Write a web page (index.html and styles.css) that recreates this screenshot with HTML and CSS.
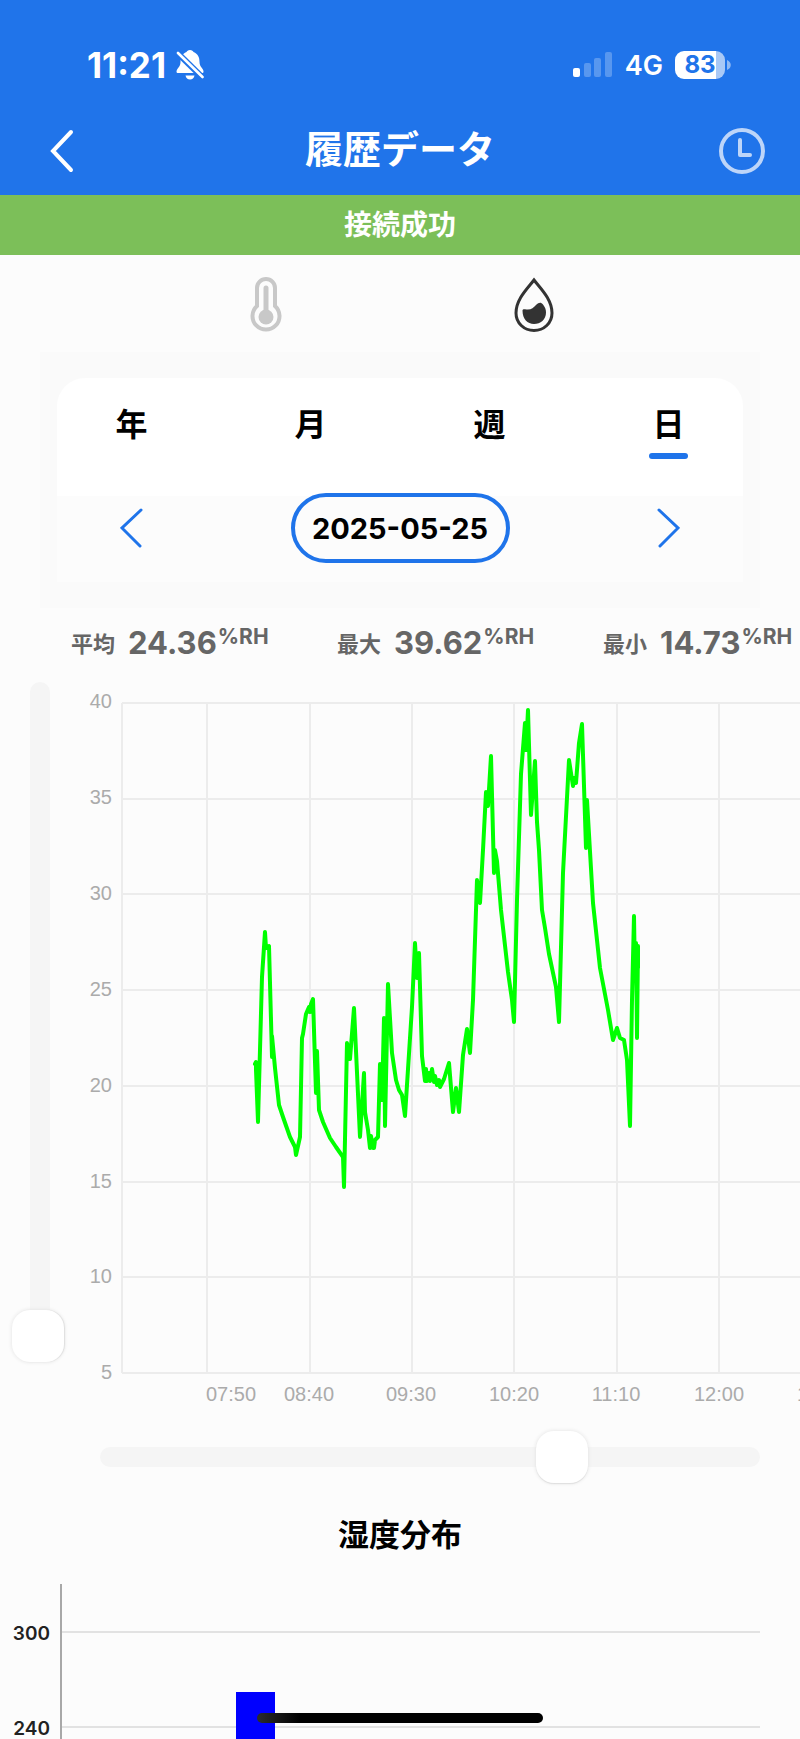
FILE: index.html
```html
<!DOCTYPE html>
<html lang="ja">
<head>
<meta charset="utf-8">
<meta name="viewport" content="width=device-width, initial-scale=1">
<title>履歴データ</title>
<link rel="stylesheet" href="styles.css">
</head>
<body>
<header class="header">
  <div class="status">
    <div class="status-group">
      <span class="status-time">11:21</span>
      <svg class="bell" width="28" height="30" viewBox="0 0 28 30" aria-hidden="true">
        <path d="M14 0c-2 0-3 1-3.500 2C6 4 4.500 7 4.500 12c0 5-4 6.500-4 9.500 0 1 .6 1.500 1.500 1.500h24c1 0 1.500-.5 1.500-1.500 0-3-4-4.500-4-9.500 0-5-1.500-8-6-10C17 1 16 0 14 0z" fill="#fff"/>
        <path d="M9.500 25.500h9c-.5 2.500-2.200 4-4.500 4s-4-1.500-4.500-4z" fill="#fff"/>
        <path d="M1 2.500L27 28" stroke="#2074ea" stroke-width="6"/>
        <path d="M2 3L26.500 27" stroke="#fff" stroke-width="2.600" stroke-linecap="round"/>
      </svg>
    </div>
    <div class="status-group status-right">
      <svg width="40" height="26" viewBox="0 0 40 26" fill="#fff" aria-hidden="true">
        <rect x="0" y="16" width="7" height="9" rx="2"/>
        <g opacity=".25">
          <rect x="11" y="11" width="7" height="14" rx="2"/>
          <rect x="21" y="6" width="7" height="19" rx="2"/>
          <rect x="32" y="0" width="7" height="25" rx="2"/>
        </g>
      </svg>
      <span class="network">4G</span>
      <span class="battery"><span class="battery-body">83</span><svg width="5" height="10" viewBox="0 0 5 10" aria-hidden="true"><path d="M1 0c5 2 5 8 0 10z" fill="#8fb9f4"/></svg></span>
    </div>
  </div>
  <div class="nav">
    <button class="icon-button nav-back" type="button" aria-label="戻る">
      <svg width="24" height="44" viewBox="0 0 24 44" aria-hidden="true"><path d="M21 3L3 22l18 19" fill="none" stroke="#fff" stroke-width="4" stroke-linecap="round" stroke-linejoin="miter"/></svg>
    </button>
    <h1 class="nav-title">履歴データ</h1>
    <button class="icon-button nav-clock" type="button" aria-label="時刻">
      <svg width="46" height="46" viewBox="0 0 46 46" fill="none" stroke="#bdd5f9" stroke-width="4" stroke-linecap="round" stroke-linejoin="round" aria-hidden="true"><circle cx="23" cy="23" r="21"/><path d="M21 12v15h10"/></svg>
    </button>
  </div>
</header>
<div class="notice" role="status">接続成功</div>
<main>
  <div class="kinds">
    <button class="icon-button" type="button" aria-label="温度">
      <svg width="32" height="58" viewBox="0 0 32 58" fill="none" stroke="#c8c8c8" aria-hidden="true">
        <path d="M7 30V12a9 9 0 0 1 18 0v18a13.500 13.500 0 1 1-18 0z" stroke-width="4"/>
        <path d="M16 12v29" stroke-width="5" stroke-linecap="round"/>
        <circle cx="16" cy="41" r="7.500" fill="#c8c8c8" stroke="none"/>
      </svg>
    </button>
    <button class="icon-button" type="button" aria-label="湿度">
      <svg width="40" height="56" viewBox="0 0 40 56" aria-hidden="true">
        <path d="M20 3C14 11 2 22 2 36c0 10 8 17.500 18 17.500S38 46 38 36C38 22 26 11 20 3z" fill="none" stroke="#333" stroke-width="3"/>
        <path d="M8.500 33.500c0-1 1-1.500 2.500-1.300 6 1 8-1 11-4.200 3-3 5-3 7-.5 2 2.500 3 5 3 8 0 7-5.500 11.500-12 11.500S8.500 42 8.500 33.500z" fill="#333"/>
      </svg>
    </button>
  </div>
  <section class="period">
    <div class="period-card">
      <div class="tabs">
        <button class="tab" type="button">年</button>
        <button class="tab" type="button">月</button>
        <button class="tab" type="button">週</button>
        <button class="tab tab-active" type="button">日</button>
      </div>
      <div class="date-row">
        <button class="icon-button" type="button" aria-label="前の日">
          <svg width="24" height="40" viewBox="0 0 24 40" aria-hidden="true"><path d="M21 2L2 20l18 18" fill="none" stroke="#1f74ea" stroke-width="3" stroke-linecap="round"/></svg>
        </button>
        <button class="date" type="button">2025-05-25</button>
        <button class="icon-button" type="button" aria-label="次の日">
          <svg width="24" height="40" viewBox="0 0 24 40" aria-hidden="true"><path d="M3 2l19 18L4 38" fill="none" stroke="#1f74ea" stroke-width="3" stroke-linecap="round"/></svg>
        </button>
      </div>
    </div>
  </section>
  <div class="stats">
    <div class="stat"><span class="stat-label">平均</span><span class="stat-value">24.36</span><span class="stat-unit">%RH</span></div>
    <div class="stat"><span class="stat-label">最大</span><span class="stat-value">39.62</span><span class="stat-unit">%RH</span></div>
    <div class="stat"><span class="stat-label">最小</span><span class="stat-value">14.73</span><span class="stat-unit">%RH</span></div>
  </div>
  <div class="chart-row">
    <input class="slider slider-vertical" type="range" min="0" max="100" value="0" aria-label="縦の拡大">
    <svg class="chart" role="img" aria-label="湿度の推移">
      <g class="grid">
        <path d="M42 21V691M127 21V691M230 21V691M332 21V691M434 21V691M537 21V691M639 21V691M742 21V691"/>
        <line x1="42" x2="100%" y1="21" y2="21"/>
        <line x1="42" x2="100%" y1="117" y2="117"/>
        <line x1="42" x2="100%" y1="212" y2="212"/>
        <line x1="42" x2="100%" y1="308" y2="308"/>
        <line x1="42" x2="100%" y1="404" y2="404"/>
        <line x1="42" x2="100%" y1="500" y2="500"/>
        <line x1="42" x2="100%" y1="595" y2="595"/>
        <line x1="42" x2="100%" y1="691" y2="691"/>
      </g>
      <g class="axis-text axis-y">
        <text x="32" y="26">40</text><text x="32" y="122">35</text><text x="32" y="218">30</text><text x="32" y="314">25</text>
        <text x="32" y="410">20</text><text x="32" y="506">15</text><text x="32" y="601">10</text><text x="32" y="697">5</text>
      </g>
      <g class="axis-text axis-x">
        <text x="151" y="719">07:50</text><text x="229" y="719">08:40</text><text x="331" y="719">09:30</text><text x="434" y="719">10:20</text>
        <text x="536" y="719">11:10</text><text x="639" y="719">12:00</text><text x="742" y="719">12:50</text>
      </g>
      <polyline class="series" transform="translate(-80 -682)" points="255,1064 256,1062 256,1070 258,1122 262,977 265,932 266,948 269,946 272,1057 272,1036 275,1068 279,1105 283,1117 290,1137 295,1147 296,1155 300,1137 302,1038 303,1034 306,1014 309,1007 310,1012 311,1004 313,999 316,1093 317,1051 319,1110 323,1122 330,1138 336,1147 343,1157 344,1187 347,1043 350,1059 354,1008 360,1137 364,1073 365,1112 368,1130 370,1148 371,1136 373,1148 374,1148 375,1140 378,1137 380,1064 382,1100 384,1018 385,1126 388,984 392,1053 396,1080 399,1090 402,1095 405,1116 412,1007 415,943 417,978 419,953 422,1056 425,1081 426,1069 427,1081 429,1073 430,1081 432,1069 434,1082 435,1076 437,1085 439,1080 440,1087 444,1079 449,1063 453,1112 456,1088 459,1112 463,1055 467,1029 470,1053 473,1000 477,880 480,903 483,850 486,792 488,806 491,756 494,873 495,850 497,861 501,910 508,972 512,1000 514,1022 517,900 521,774 525,723 526,750 528,710 531,815 535,761 537,822 539,850 542,910 545,928 549,954 556,987 559,1022 563,873 569,760 573,786 574,778 576,783 579,743 582,724 586,848 587,800 593,903 600,968 608,1010 613,1040 617,1028 620,1038 624,1040 627,1060 630,1126 632,1000 634,916 635,980 636,943 637,1038 638,946 638,968"/>
    </svg>
  </div>
  <div class="slider-row">
    <input class="slider slider-horizontal" type="range" min="0" max="1000" value="717" aria-label="表示位置">
  </div>
  <section>
    <h2 class="section-title">湿度分布</h2>
    <svg class="histogram" role="img" aria-label="湿度分布">
      <svg x="0" y="0" width="95%" height="156">
        <line class="histogram-grid" x1="62" x2="100%" y1="49" y2="49"/>
        <line class="histogram-grid" x1="62" x2="100%" y1="144" y2="144"/>
      </svg>
      <rect x="236" y="109" width="39" height="47" fill="#00f"/>
      <path d="M61 1V156" stroke="#a8a8a8" stroke-width="2"/>
      <text class="histogram-text" x="50" y="57">300</text>
      <text class="histogram-text" x="50" y="152">240</text>
    </svg>
  </section>
</main>
<div class="home-indicator"></div>
</body>
</html>
```
FILE: styles.css
```css
* {
  box-sizing: border-box;
}

body {
  margin: 0;
  background: #fcfcfc;
  color: #000;
  font-family: Inter, "Noto Sans CJK JP", sans-serif;
  overflow-x: hidden;
}

button {
  margin: 0;
  padding: 0;
  border: 0;
  background: none;
  color: inherit;
  font: inherit;
}

svg {
  display: block;
}

.icon-button {
  display: flex;
  align-items: center;
  justify-content: center;
}

.header {
  background: #2074ea;
  color: #fff;
}

.status {
  display: flex;
  justify-content: space-between;
  height: 107px;
  padding: 45px 69px 22px 87px;
}

.status-group {
  display: flex;
  align-items: center;
  height: 40px;
  gap: 10px;
}

.status-right {
  gap: 12px;
}

.status-time {
  font-size: 35px;
  font-weight: 700;
}

.network {
  font-size: 27px;
  font-weight: 600;
}

.battery {
  display: flex;
  align-items: center;
  gap: 1px;
}

.battery-body {
  width: 50px;
  height: 28px;
  border-radius: 9px;
  background: linear-gradient(to right, #fff 82%, #a9c9f6 82%);
  color: #2074ea;
  font-size: 24px;
  font-weight: 700;
  line-height: 28px;
  text-align: center;
}

.nav {
  display: grid;
  grid-template-columns: 1fr auto 1fr;
  align-items: center;
  height: 88px;
  padding: 0 35px;
}

.nav-back {
  justify-self: start;
  margin-left: 15px;
}

.nav-clock {
  justify-self: end;
}

.nav-title {
  margin: 0;
  padding-bottom: 4px;
  font-size: 38px;
  font-weight: 700;
  line-height: 56px;
}

.notice {
  background: #7cbf59;
  color: #fff;
  font-size: 28px;
  font-weight: 700;
  line-height: 60px;
  text-align: center;
}

.kinds {
  display: grid;
  grid-template-columns: 1fr 1fr;
  justify-items: center;
  align-items: center;
  height: 97px;
  padding: 2px 16.6% 0;
}

.period {
  margin: 0 40px;
  padding: 26px 17px;
  background: #fafafa;
}

.period-card {
  height: 204px;
  border-radius: 28px 28px 0 0;
  background: linear-gradient(#fff 58%, #fcfcfc 58%);
}

.tabs {
  display: grid;
  grid-template-columns: repeat(4, 1fr);
  margin: 0 -15px;
  padding-top: 23px;
}

.tab {
  display: flex;
  flex-direction: column;
  align-items: center;
  height: 60px;
  font-size: 32px;
  font-weight: 700;
  line-height: 48px;
}

.tab-active::after {
  content: "";
  width: 39px;
  height: 6px;
  margin-top: 4px;
  border-radius: 3px;
  background: #1f74ea;
}

.date-row {
  display: flex;
  justify-content: space-between;
  align-items: center;
  margin-top: 32px;
  padding: 0 63px;
}

.date {
  width: 219px;
  height: 70px;
  border: 4px solid #1f74ea;
  border-radius: 35px;
  font-size: 29px;
  font-weight: 700;
}

.stats {
  display: flex;
  height: 74px;
  padding: 14px 0 0 71px;
  gap: 66px;
  color: #666;
}

.stat {
  display: flex;
  align-items: center;
  flex: 0 0 200px;
  height: 40px;
  white-space: nowrap;
}

.stat-label {
  margin-right: 13px;
  font-size: 22px;
  font-weight: 700;
}

.stat-value {
  font-size: 31px;
  font-weight: 700;
}

.stat-unit {
  align-self: flex-start;
  margin-left: 1px;
  font-size: 21px;
  font-weight: 700;
  line-height: 30px;
}

.chart-row {
  display: flex;
  align-items: flex-start;
}

.chart {
  flex: 1;
  min-width: 0;
  height: 730px;
  overflow: hidden;
}

.grid {
  fill: none;
  stroke: #ececec;
  stroke-width: 2;
}

.axis-text {
  fill: #ababab;
  font-family: "Liberation Sans", sans-serif;
  font-size: 20px;
}

.axis-y {
  text-anchor: end;
}

.axis-x {
  text-anchor: middle;
}

.series {
  fill: none;
  stroke: #0f0;
  stroke-width: 4;
  stroke-linecap: round;
  stroke-linejoin: round;
}

.slider {
  -webkit-appearance: none;
  appearance: none;
  display: block;
  margin: 0;
  background: none;
}

.slider::-webkit-slider-runnable-track {
  border-radius: 10px;
  background: #f5f5f5;
}

.slider::-webkit-slider-thumb {
  -webkit-appearance: none;
  width: 52px;
  height: 52px;
  border-radius: 18px;
  background: #fff;
}

.slider-vertical {
  writing-mode: vertical-lr;
  direction: rtl;
  width: 52px;
  height: 680px;
  margin: 0 14px;
}

.slider-vertical::-webkit-slider-runnable-track {
  width: 20px;
}

.slider-vertical::-webkit-slider-thumb {
  margin-left: -18px;
  box-shadow: 0 0 4px #e2e2e2, 1px 0 1px #ddd;
}

.slider-row {
  padding: 19px 40px 0 100px;
}

.slider-horizontal {
  width: 100%;
  height: 52px;
}

.slider-horizontal::-webkit-slider-runnable-track {
  height: 20px;
}

.slider-horizontal::-webkit-slider-thumb {
  margin-top: -16px;
  box-shadow: 0 0 4px #e2e2e2, 0 1px 1px #ddd;
}

.section-title {
  margin: 32px 0 28px;
  font-size: 31px;
  font-weight: 700;
  line-height: 40px;
  text-align: center;
}

.histogram {
  width: 100%;
  height: 156px;
}

.histogram-grid {
  stroke: #e2e2e2;
  stroke-width: 2;
}

.histogram-text {
  fill: #222;
  font-size: 19px;
  font-weight: 600;
  text-anchor: end;
}

.home-indicator {
  position: fixed;
  bottom: 16px;
  left: 50%;
  width: 286px;
  height: 10px;
  margin-left: -143px;
  border-radius: 5px;
  background: linear-gradient(to right, #2c2c2c, #000 15%);
}
```
